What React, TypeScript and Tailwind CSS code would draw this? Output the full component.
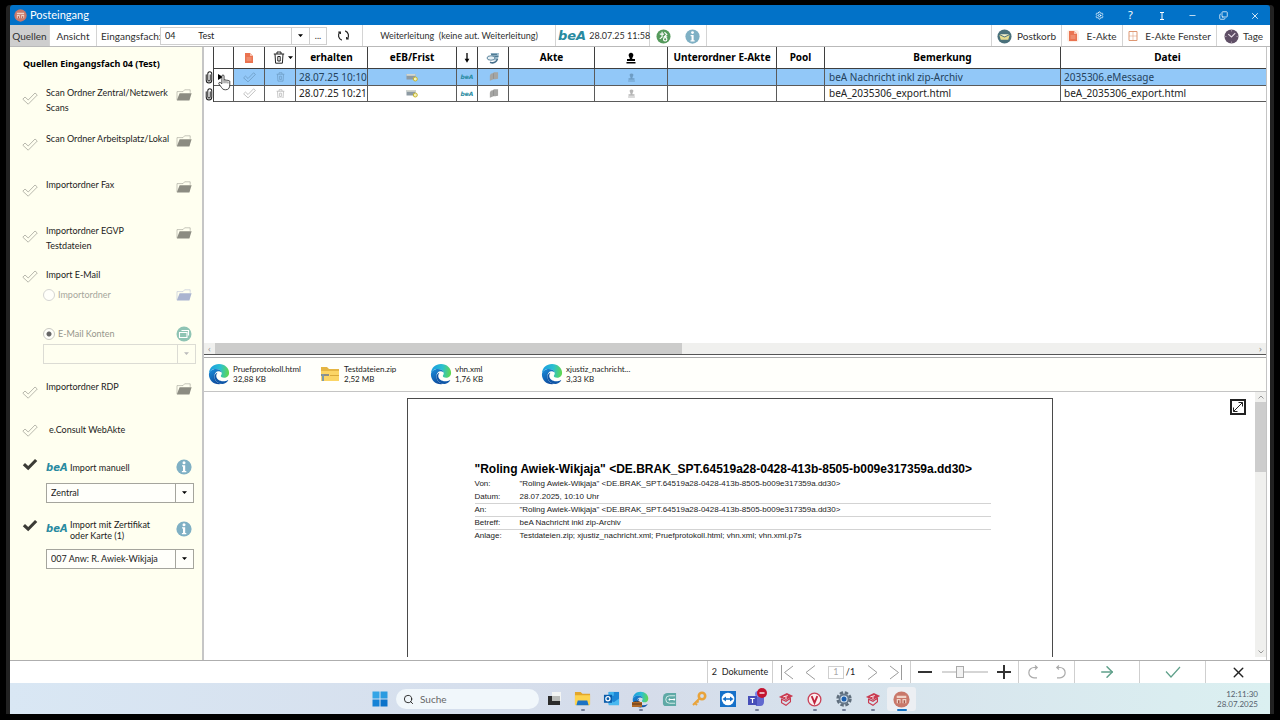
import React, { useId } from "react";
import { Settings, Search, X, Minus, Copy, ArrowRight, Check } from "lucide-react";

type IconProps = { className?: string };

function TickShape({ className = "" }: IconProps) {
  return (
    <svg viewBox="0 0 16 13" className={className} strokeWidth="1" strokeLinejoin="round" aria-hidden="true">
      <path d="M0.8 7.2 3 5l3.2 3L13 1l2.3 2L6.2 12.2z" />
    </svg>
  );
}

function ClipIcon({ className = "" }: IconProps) {
  return (
    <svg viewBox="0 0 8 14" className={className} fill="none" stroke="currentColor" strokeWidth="1.100" strokeLinecap="round" aria-hidden="true">
      <path d="M1 4v5.700c0 4.300 6 4.300 6 0V3.300c0-3.400-4.300-3.400-4.300 0v6c0 1.900 2.600 1.900 2.600 0V4" />
    </svg>
  );
}

function FolderIcon({ className = "" }: IconProps) {
  return (
    <svg viewBox="0 0 16 12" className={className} aria-hidden="true">
      <path d="M1 11V2.600h6L8.600.8h5.600v3" fill="none" stroke="currentColor" strokeOpacity=".55" strokeWidth=".9" />
      <path d="M3.600 4.200h12L13.400 11.400H.8z" fill="currentColor" />
    </svg>
  );
}

function EdgeIcon({ className = "" }: IconProps) {
  const id = useId();
  return (
    <svg viewBox="0 0 24 24" className={className} aria-hidden="true">
      <defs>
        <linearGradient id={id + "a"} x1="0" y1="0.4" x2="1" y2="0.5">
          <stop offset="0" stopColor="#1b9be0" />
          <stop offset=".55" stopColor="#2bc0d0" />
          <stop offset="1" stopColor="#62d84e" />
        </linearGradient>
        <linearGradient id={id + "b"} x1="0" y1="0" x2="0.5" y2="1">
          <stop offset="0" stopColor="#1a8fdc" />
          <stop offset="1" stopColor="#0d4c9e" />
        </linearGradient>
      </defs>
      <path
        d="M1 11C1.500 5 6 1 12 1c6.500 0 11 4.500 11 9.500 0 3.500-2.500 5.500-5.500 5.500-2 0-3.500-.8-3.500-1.800 0-.7 1-1.200 1-3C15 9 12.500 6.500 8.500 6.500 5 6.500 2.500 8.200 1 11z"
        fill={`url(#${id}a)`}
      />
      <path
        d="M1 12.500C1.200 9 4.500 6.500 8.500 6.500c3.500 0 5.800 1.600 6.400 3.800-1-.9-2.200-1.300-3.400-1.300-2.500 0-4.500 2.200-4.500 5.500 0 4.500 3.500 8 8 8.200-1 .3-2 .5-3 .5C5.700 23.200 1 18.500 1 12.500z"
        fill={`url(#${id}b)`}
      />
      <path
        d="M10.300 10.500c-.8 1-1.300 2.200-1.300 3.500 0 3.600 3.600 6 7.500 6 2 0 3.700-.5 5-1.300.4-.2.7.2.5.5-1.500 2.300-4 3.700-6.500 3.700C10.800 22.900 7 19 7 14.500c0-1.800 1.500-3.500 3.300-4z"
        fill="#0f57a8"
      />
    </svg>
  );
}

function ZipFolder({ className = "" }: IconProps) {
  return (
    <svg viewBox="0 0 20 16" className={className} aria-hidden="true">
      <path d="M1 1h6l2 2h10v12H1z" fill="#e5b544" />
      <path d="M1 5h18v10H1z" fill="#fbd566" />
      <path d="M1 8h8v2H1z" fill="#8f8f86" />
      <path d="M2 8v7h2V8z" fill="#7f9aa8" />
      <path d="M10 9h9v1h-9z" fill="#d9a93a" />
    </svg>
  );
}

function InfoBadge({ className = "" }: IconProps) {
  return (
    <svg viewBox="0 0 16 16" className={className} aria-hidden="true">
      <circle cx="8" cy="8" r="7.600" fill="#7fb0c4" />
      <circle cx="8" cy="3.800" r="1.500" fill="#fff" />
      <path d="M6 6.300h3.200v5.600h1.100v1.300H5.900v-1.300H7V7.600H6z" fill="#fff" />
    </svg>
  );
}

function SendBadge({ className = "" }: IconProps) {
  return (
    <svg viewBox="0 0 16 16" className={className} aria-hidden="true">
      <circle cx="8" cy="8" r="7.500" fill="#559a5c" />
      <g fill="none" stroke="#fff" strokeWidth="1.200">
        <path d="M4 5.500h4.500M6.500 3v5.500L4 10.500" />
        <circle cx="9.800" cy="11" r="1.800" />
        <path d="M9 3.500l2.500 2.300L9 8.200h3" />
      </g>
    </svg>
  );
}

function MailBadge({ className = "" }: IconProps) {
  return (
    <svg viewBox="0 0 16 16" className={className} aria-hidden="true">
      <circle cx="8" cy="8" r="7.500" fill="#8fc4b4" />
      <path d="M5.500 4.500h7v5M3.500 6.500h7.500v5H3.500z" fill="none" stroke="#fff" strokeWidth="1.100" />
    </svg>
  );
}

function DocIcon({ className = "" }: IconProps) {
  return (
    <svg viewBox="0 0 10 12" className={className} aria-hidden="true">
      <path d="M1 1h5l3 3v7H1z" fill="#ea7350" />
      <path d="M6 1v3h3" fill="#f8c0ac" />
      <path d="M2.500 6h5M2.500 8h5" stroke="#f7b7a0" strokeWidth=".7" />
    </svg>
  );
}

function TrashIcon({ className = "" }: IconProps) {
  return (
    <svg viewBox="0 0 12 13" className={className} fill="none" stroke="currentColor" strokeLinejoin="round" aria-hidden="true">
      <path d="M.8 3h10.400M4 3V1h4v2M2 3l.6 9.200h6.800L10 3M4.800 5.500v4.500h2.400V5.500z" />
    </svg>
  );
}

function StampIcon({ className = "" }: IconProps) {
  return (
    <svg viewBox="0 0 12 12" className={className} fill="currentColor" aria-hidden="true">
      <path d="M6 .8a2.400 2.400 0 0 1 2.300 3C8 5 7.200 5.500 7.200 7H10v2H2V7h2.800c0-1.500-.8-2-1.100-3.200A2.400 2.400 0 0 1 6 .8zM1.500 10h9v1.400h-9z" />
    </svg>
  );
}

function CardIcon({ className = "" }: IconProps) {
  return (
    <svg viewBox="0 0 12 9" className={className} aria-hidden="true">
      <path d="M.5 1h9v5.500h-9z" fill="#8d9aa3" />
      <path d="M.5 1h9v1.800h-9z" fill="#d3d6cf" />
      <circle cx="9.300" cy="6" r="2" fill="#f4f0b8" stroke="#c5b530" />
    </svg>
  );
}

function PagesIcon({ className = "" }: IconProps) {
  return (
    <svg viewBox="0 0 12 10" className={className} aria-hidden="true">
      <path d="M3 2l3-.8V.3h5v7L8 8H6l-4 1.500V4z" fill="#a5a5a3" />
      <path d="M6 1.500v6" stroke="#8a8a88" strokeWidth=".7" />
    </svg>
  );
}

function PrinterIcon({ className = "" }: IconProps) {
  return (
    <svg viewBox="0 0 14 12" className={className} aria-hidden="true">
      <path d="M4.500 1H13l-1 6.500-4 1z" fill="#9dbccd" />
      <path d="M5 2.300h6M5 4.300h7.500" stroke="#3d6c88" />
      <ellipse cx="5" cy="6" rx="4" ry="2.200" fill="#e6f0f5" stroke="#5d869e" />
      <path d="M4 10.200c3 1.300 6 0 7.500-3.200" fill="none" stroke="#466f8b" strokeWidth="1.600" />
    </svg>
  );
}

function DownTriangle({ className = "" }: IconProps) {
  return (
    <svg viewBox="0 0 6 4" className={className} fill="currentColor" aria-hidden="true">
      <path d="M0 .3h6L3 3.700z" />
    </svg>
  );
}

function RobotBadge({ className = "" }: IconProps) {
  return (
    <svg viewBox="0 0 16 16" className={className} aria-hidden="true">
      <circle cx="8" cy="8" r="7.600" fill="#c9786a" />
      <path d="M3.500 4.500h9v2h-9zM3.500 7.500h3.600v4H3.500zM8.900 7.500h3.600v4H8.900z" fill="#f0d3c8" />
      <path d="M4.700 8.800h1.400v2.700H4.700zM10 8.800h1.400v2.700H10z" fill="#a85848" />
    </svg>
  );
}

function BeaLogo({ className = "" }: IconProps) {
  return <span className={"font-['DejaVu_Sans',sans-serif] font-bold italic text-[#288aa0] " + className}>beA</span>;
}

function SelectBox(props: {
  id: string;
  label: string;
  value: string;
  className: string;
  arrow?: string;
  disabled?: boolean;
}) {
  const { id, label, value, className, arrow = "border-l border-[#a5a59d] text-black", disabled = false } = props;
  return (
    <div className={"relative " + className}>
      <select
        id={id}
        aria-label={label}
        disabled={disabled}
        className="block h-full w-full appearance-none bg-transparent pl-1 pr-5 text-[9px] text-[#222] outline-none"
      >
        <option>{value}</option>
      </select>
      <span className={"pointer-events-none absolute inset-y-0 right-0 flex w-[18px] items-center justify-center " + arrow}>
        <DownTriangle className="w-[5px]" />
      </span>
    </div>
  );
}

function SourceRow(props: { label: string; height: string; folder?: boolean; tick?: string; text?: string }) {
  const { label, height, folder = true, tick = "mt-[7px]", text = "" } = props;
  return (
    <div className={"flex items-start " + height}>
      <TickShape className={"mr-[8px] w-[16px] shrink-0 fill-none stroke-[#b9b9ae] " + tick} />
      <span className={"flex-1 leading-[15px] " + text}>{label}</span>
      {folder && (
        <button aria-label={"Ordner " + label} className="mt-[4px] shrink-0 text-[#8c8c82]">
          <FolderIcon className="w-[16px]" />
        </button>
      )}
    </div>
  );
}

function Sidebar() {
  return (
    <aside className="w-[194px] shrink-0 border-r-2 border-[#c6c6c6] bg-[#fffff0] pl-[12px] pr-[10px] font-['Lato','Noto_Sans',sans-serif] text-[9px] text-[#1c1c1c]">
      <h2 className="h-[38px] whitespace-nowrap pl-px pt-[9px] font-['Noto_Sans',sans-serif] font-bold leading-[16px] text-black">
        Quellen Eingangsfach 04 (Test)
      </h2>
      <SourceRow label="Scan Ordner Zentral/Netzwerk Scans" height="h-[46px]" />
      <SourceRow label="Scan Ordner Arbeitsplatz/Lokal" height="h-[46px]" text="whitespace-nowrap" />
      <SourceRow label="Importordner Fax" height="h-[46px]" />
      <SourceRow label="Importordner EGVP Testdateien" height="h-[44px]" text="pr-[40px]" />
      <SourceRow label="Import E-Mail" height="h-[20px]" folder={false} tick="mt-[3px]" />
      <div className="flex h-[39px] items-start pl-[21px] text-[#a6a69c]">
        <label className="flex flex-1 items-center gap-[3px] leading-[15px]">
          <input
            type="radio"
            name="mail"
            disabled
            className="size-[12px] appearance-none rounded-full border border-[#d5d5d2] bg-[#fffffa]"
          />
          Importordner
        </label>
        <FolderIcon className="mt-[2px] w-[16px] text-[#aab4d0]" />
      </div>
      <div className="flex h-[18px] items-start pl-[21px] text-[#96968c]">
        <label className="flex flex-1 items-center gap-[3px] leading-[15px]">
          <input
            type="radio"
            name="mail"
            disabled
            defaultChecked
            className="size-[12px] appearance-none rounded-full border border-[#c9c9c2] bg-[radial-gradient(circle,#666_2px,#fffffa_3px)]"
          />
          E-Mail Konten
        </label>
        <MailBadge className="w-[16px]" />
      </div>
      <SelectBox
        id="konto"
        label="E-Mail Konto"
        value=""
        disabled
        className="ml-[21px] -mr-[4px] h-[20px] border border-[#dcdcd4]"
        arrow="border-l border-[#dcdcd4] text-[#bbb]"
      />
      <div className="h-[15px]" />
      <SourceRow label="Importordner RDP" height="h-[43px]" />
      <SourceRow label="e.Consult WebAkte" height="h-[36px]" folder={false} tick="mt-[2px]" text="pl-[3px]" />
      <div className="flex h-[25px] items-start">
        <TickShape className="mr-[8px] w-[16px] fill-[#3b3b36]" />
        <BeaLogo className="w-[24px] text-[10px] leading-[20px]" />
        <label htmlFor="manuell" className="flex-1 leading-[20px]">
          Import manuell
        </label>
        <InfoBadge className="mt-px w-[16px]" />
      </div>
      <SelectBox
        id="manuell"
        label="Import manuell"
        value="Zentral"
        className="-mr-[2px] ml-[24px] h-[20px] border border-[#a5a59d] bg-[#fffffa]"
      />
      <div className="mt-[16px] flex h-[30px] items-start">
        <TickShape className="mr-[8px] w-[16px] fill-[#3b3b36]" />
        <BeaLogo className="w-[24px] text-[10px] leading-[20px]" />
        <label htmlFor="zertifikat" className="flex-1 pr-[20px] leading-[11px]">
          Import mit Zertifikat oder Karte (1)
        </label>
        <InfoBadge className="mt-[2px] w-[16px]" />
      </div>
      <SelectBox
        id="zertifikat"
        label="Import mit Zertifikat"
        value="007 Anw: R. Awiek-Wikjaja"
        className="-mr-[2px] ml-[24px] h-[20px] border border-[#a5a59d] bg-[#fffffa]"
      />
    </aside>
  );
}

function TitleBar() {
  const button = "flex h-full w-[31px] items-center justify-center";
  return (
    <header className="flex h-[20px] shrink-0 items-center rounded-t-[3px] bg-[#0272c8] pl-[4px] pt-px text-white">
      <RobotBadge className="w-[13px]" />
      <h1 className="ml-[3px] flex-1 font-['Lato','Noto_Sans',sans-serif] text-[11px]">Posteingang</h1>
      <button aria-label="Einstellungen" className={button}>
        <Settings size={9} />
      </button>
      <button aria-label="Hilfe" className={button + " text-[11px]"}>
        ?
      </button>
      <button aria-label="Anheften" className={button}>
        <svg viewBox="0 0 8 8" className="w-[8px]" stroke="currentColor" aria-hidden="true">
          <path d="M2 .5h4M2 7.500h4M4 .5v7" />
        </svg>
      </button>
      <button aria-label="Minimieren" className={button}>
        <Minus size={9} />
      </button>
      <button aria-label="Wiederherstellen" className={button}>
        <Copy size={9} className="-scale-x-100 rotate-180" />
      </button>
      <button aria-label="Schließen" className={button}>
        <X size={10} />
      </button>
    </header>
  );
}

function Toolbar() {
  const cell = "flex h-full items-center border-r border-[#d4d4d4]";
  return (
    <div className="flex h-[22px] shrink-0 items-center border-b border-[#b9b9b9] font-['Lato','Noto_Sans',sans-serif] text-[10px] text-[#303030]">
      <button className={cell + " w-[40px] justify-center bg-[#cecece] pt-px"}>Quellen</button>
      <button className={cell + " w-[47px] justify-center pt-px"}>Ansicht</button>
      <label htmlFor="fach" className="w-[63px] pl-[4px] pt-px">
        Eingangsfach:
      </label>
      <SelectBox
        id="fach"
        label="Eingangsfach"
        value={"04\u00a0\u00a0\u00a0\u00a0\u00a0\u00a0\u00a0\u00a0\u00a0\u00a0Test"}
        className="h-[18px] w-[150px] border border-[#cfcfcf]"
        arrow="border-l border-[#cfcfcf] text-black"
      />
      <button aria-label="Fach auswählen" className="h-[18px] w-[17px] border-y border-r border-[#cfcfcf] text-[9px] leading-[16px]">
        ...
      </button>
      <button aria-label="Aktualisieren" className={cell + " w-[36px] justify-center pr-[3px]"}>
        <svg viewBox="0 0 14 14" className="w-[13px]" fill="none" stroke="#222" strokeWidth="1.300" aria-hidden="true">
          <path d="M5.200 12A5.400 5.400 0 0 1 3 3.300M8.800 2A5.400 5.400 0 0 1 11 10.700" />
          <path d="M1.400 3.300h2.200v2.200M12.600 10.700h-2.200V8.500" />
        </svg>
      </button>
      <button className={cell + " w-[193px] justify-center whitespace-pre pt-px text-[9px]"}>
        {"Weiterleitung  (keine aut. Weiterleitung)"}
      </button>
      <button className={cell + " w-[94px] gap-[3px] whitespace-nowrap pl-[2px] pt-px text-[9px]"}>
        <BeaLogo className="text-[13px]" />
        28.07.25 11:58
      </button>
      <div className={cell + " w-[57px] justify-center gap-[14px] pt-px"}>
        <button aria-label="Senden">
          <SendBadge className="w-[15px]" />
        </button>
        <button aria-label="Information">
          <InfoBadge className="w-[15px]" />
        </button>
      </div>
      <div className={cell + " flex-1"} />
      <button className={cell + " w-[70px] justify-center gap-[5px] pt-px"}>
        <svg viewBox="0 0 16 16" className="w-[15px]" aria-hidden="true">
          <circle cx="8" cy="8" r="7.500" fill="#49707b" />
          <path d="M2.500 6.500 8 9l5.500-2.500-1.500 5H4z" fill="#e6dc8e" />
          <path d="M3 5.500h10L8 8z" fill="#f6f2cc" />
        </svg>
        Postkorb
      </button>
      <button className={cell + " w-[61px] justify-center gap-[7px] pt-px"}>
        <span className="rounded-[3px] bg-[#fdeee4] px-px">
          <DocIcon className="w-[10px]" />
        </span>
        E-Akte
      </button>
      <button className={cell + " w-[94px] justify-center gap-[7px] whitespace-nowrap pt-px"}>
        <svg viewBox="0 0 10 10" className="w-[10px]" fill="none" stroke="#de9874" aria-hidden="true">
          <path d="M1 .5h8v9H1z" />
          <path d="M5 .5v9M1 5h8" strokeOpacity=".5" />
        </svg>
        E-Akte Fenster
      </button>
      <button className="flex w-[53px] items-center justify-center gap-[4px] pt-px">
        <svg viewBox="0 0 16 16" className="w-[15px]" aria-hidden="true">
          <circle cx="8" cy="8" r="7.500" fill="#5f4f66" />
          <path d="M4.500 5.500 8 8.500 12 4.500" fill="none" stroke="#e9dfe9" strokeWidth="1.200" />
          <path d="M8 1.500v1M8 13.500v1M1.500 8h1M13.500 8h1" stroke="#cbbccb" />
        </svg>
        Tage
      </button>
    </div>
  );
}

type Mail = { received: string; note: string; file: string; selected: boolean };

const mails: Mail[] = [
  { received: "28.07.25 10:10", note: "beA Nachricht inkl zip-Archiv", file: "2035306.eMessage", selected: true },
  { received: "28.07.25 10:21", note: "beA_2035306_export.html", file: "beA_2035306_export.html", selected: false },
];

function HandPointer({ className = "" }: IconProps) {
  return (
    <svg viewBox="0 0 14 18" className={className} aria-hidden="true">
      <path
        d="M4.200 10.500V2.200c0-1.600 2.300-1.600 2.300 0v4.600c.2-1 2-.9 2.100.2.300-.9 2-.7 2.100.4.500-.7 2-.4 2 .8v3.600c0 3-1.300 5.200-4.500 5.200-2.600 0-3.400-.9-4.400-2.500L1 10.800c-.8-1.500 1-2.500 2-1.300z"
        fill="#fff"
        stroke="#222"
        strokeWidth=".9"
      />
      <path d="M6.500 7v3M8.600 7.500V10M10.700 8v2.200" stroke="#222" strokeWidth=".7" />
    </svg>
  );
}

function MailTable() {
  const th = "h-[22px] border-b border-r border-[#3f3f3f] p-0 align-middle";
  return (
    <table className="w-full table-fixed border-separate border-spacing-0 text-[10px] text-[#222]">
      <colgroup>
        <col className="w-[10px]" />
        <col className="w-[20px]" />
        <col className="w-[31px]" />
        <col className="w-[31px]" />
        <col className="w-[72px]" />
        <col className="w-[89px]" />
        <col className="w-[21px]" />
        <col className="w-[31px]" />
        <col className="w-[86px]" />
        <col className="w-[73px]" />
        <col className="w-[109px]" />
        <col className="w-[48px]" />
        <col className="w-[236px]" />
        <col />
      </colgroup>
      <thead>
        <tr className="text-[10px] font-bold text-black">
          <th className="border-r border-[#3f3f3f] p-0" />
          <th className={th} />
          <th className={th}>
            <DocIcon className="mx-auto w-[10px]" />
          </th>
          <th className={th}>
            <span className="flex items-center justify-center gap-[3px] pl-[5px]">
              <TrashIcon className="w-[12px] text-[#222]" />
              <DownTriangle className="w-[5px]" />
            </span>
          </th>
          <th className={th}>erhalten</th>
          <th className={th}>eEB/Frist</th>
          <th className={th}>
            <svg viewBox="0 0 6 10" className="mx-auto w-[6px]" aria-hidden="true">
              <path d="M3 0v7" stroke="#000" strokeWidth="1.300" />
              <path d="M.6 5.800h4.800L3 9.800z" />
            </svg>
          </th>
          <th className={th}>
            <PrinterIcon className="mx-auto w-[14px]" />
          </th>
          <th className={th}>Akte</th>
          <th className={th}>
            <StampIcon className="mx-auto w-[12px]" />
          </th>
          <th className={th + " whitespace-nowrap"}>Unterordner E-Akte</th>
          <th className={th}>Pool</th>
          <th className={th}>Bemerkung</th>
          <th className="border-b border-[#3f3f3f] p-0 pl-[8px]">Datei</th>
        </tr>
      </thead>
      <tbody>
        {mails.map((m) => {
          const td =
            "border-b border-r border-[#5a5a5a] p-0 whitespace-nowrap " +
            (m.selected ? "h-[17px] leading-[16px] bg-[#92c8f8] text-[#24425c]" : "h-[16px] leading-[15px] bg-white");
          const soft = m.selected ? "text-[#6d9cc4]" : "text-[#b5b5b5]";
          return (
            <tr key={m.file}>
              <td className="border-r border-[#3f3f3f] p-0">
                <ClipIcon className="mx-auto h-[13px] w-[8px] text-[#222]" />
              </td>
              <td className="relative border-b border-r border-[#5a5a5a] p-0">
                {m.selected && (
                  <>
                    <svg viewBox="0 0 5 6" className="ml-[4px] w-[5px]" aria-hidden="true">
                      <path d="M0 0v6l5-3z" />
                    </svg>
                    <HandPointer className="absolute left-[4px] top-[5px] z-10 w-[13px]" />
                  </>
                )}
              </td>
              <td className={td}>
                <TickShape className={"mx-auto w-[13px] fill-none stroke-current " + soft} />
              </td>
              <td className={td}>
                <TrashIcon className={"mx-auto w-[9px] " + soft} />
              </td>
              <td className={td + " pl-[3px]"}>{m.received}</td>
              <td className={td}>
                <CardIcon className="mx-auto w-[12px]" />
              </td>
              <td className={td + " text-center"}>
                <BeaLogo className="block text-[6px]" />
              </td>
              <td className={td}>
                <PagesIcon className="mx-auto w-[11px]" />
              </td>
              <td className={td} />
              <td className={td}>
                <StampIcon className={"mx-auto w-[9px] " + soft} />
              </td>
              <td className={td} />
              <td className={td} />
              <td className={td + " pl-[4px]"}>{m.note}</td>
              <td className={td + " border-r-0 pl-[3px]"}>{m.file}</td>
            </tr>
          );
        })}
      </tbody>
    </table>
  );
}

const attachments = [
  { name: "Pruefprotokoll.html", size: "32,88 KB", zip: false },
  { name: "Testdateien.zip", size: "2,52 MB", zip: true },
  { name: "vhn.xml", size: "1,76 KB", zip: false },
  { name: "xjustiz_nachricht...", size: "3,33 KB", zip: false },
];

function Attachments() {
  return (
    <ul className="flex h-[34px] shrink-0 border-b border-[#c4c4c4] bg-[#fffffb] pb-[2px] pl-[4px] font-['Lato','Noto_Sans',sans-serif] text-[8px] leading-[10px] text-[#222]">
      {attachments.map((a) => (
        <li key={a.name} className="flex w-[111px] items-center gap-[3px] whitespace-nowrap">
          <span className="flex w-[22px] justify-center">
            {a.zip ? <ZipFolder className="w-[20px]" /> : <EdgeIcon className="w-[22px]" />}
          </span>
          <span>
            {a.name}
            <br />
            {a.size}
          </span>
        </li>
      ))}
    </ul>
  );
}

const sender = '"Roling Awiek-Wikjaja" <DE.BRAK_SPT.64519a28-0428-413b-8505-b009e317359a.dd30>';

const headers = [
  { name: "Von:", value: sender, line: false },
  { name: "Datum:", value: "28.07.2025, 10:10 Uhr", line: true },
  { name: "An:", value: sender, line: true },
  { name: "Betreff:", value: "beA Nachricht inkl zip-Archiv", line: true },
  { name: "Anlage:", value: "Testdateien.zip; xjustiz_nachricht.xml; Pruefprotokoll.html; vhn.xml; vhn.xml.p7s", line: false },
];

function Preview() {
  return (
    <section className="flex min-h-0 flex-1 bg-white">
      <div className="flex min-w-0 flex-1 items-stretch pt-[6px]">
        <div className="flex-1 pl-[9px]" />
        <article className="w-[646px] border-x border-t border-[#4a4a4a] bg-white pl-[67px] pr-[61px] pt-[61px] font-['Liberation_Sans',sans-serif] text-[#222]">
          <h2 className="whitespace-nowrap text-[12px] font-bold leading-[18px] text-black">{sender}</h2>
          <dl className="text-[8px] leading-[12px]">
            {headers.map((h) => (
              <div key={h.name} className={"flex h-[13px] whitespace-nowrap " + (h.line ? "border-b border-[#d3d3d3]" : "")}>
                <dt className="w-[45px]">{h.name}</dt>
                <dd>{h.value}</dd>
              </div>
            ))}
          </dl>
        </article>
        <div className="flex flex-1 items-start justify-end pr-[9px]">
          <button aria-label="Vergrößern" className="mt-px border-2 border-[#222]">
            <svg viewBox="0 0 12 12" className="w-[12px]" fill="none" stroke="#222" aria-hidden="true">
              <path d="M1.500 10.500l9-9M6.500 1.500h4v4M1.500 6.500v4h4" />
            </svg>
          </button>
        </div>
      </div>
      <div className="flex w-[11px] flex-col items-center bg-[#f0f0ee] py-[3px]">
        <svg viewBox="0 0 6 4" className="w-[6px]" fill="none" stroke="#999" aria-hidden="true">
          <path d="M.5 3.500 3 1l2.500 2.500" />
        </svg>
        <div className="mt-[3px] h-[70px] w-full bg-[#cdcdcd]" />
        <div className="flex-1" />
        <svg viewBox="0 0 6 4" className="w-[6px]" fill="none" stroke="#999" aria-hidden="true">
          <path d="M.5.5 3 3 5.500.5" />
        </svg>
      </div>
    </section>
  );
}

function FooterBar() {
  const cell = "flex h-full items-center border-l border-[#cfcfcf]";
  const nav = "h-[15px] text-[#9b9b9b]";
  return (
    <div className="flex h-[23px] shrink-0 items-center justify-end border-t border-[#aeaeae] bg-white font-['Lato','Noto_Sans',sans-serif] text-[9px] text-[#222]">
      <span className={cell + " w-[65px] justify-center whitespace-pre"}>{"2  Dokumente"}</span>
      <div className={cell + " w-[138px] justify-between px-[7px]"}>
        <button aria-label="Erste Seite">
          <svg viewBox="0 0 14 15" className={nav} fill="none" stroke="currentColor" aria-hidden="true">
            <path d="M1.500 0v15M13 1 4.500 7.500 13 14" />
          </svg>
        </button>
        <button aria-label="Vorige Seite">
          <svg viewBox="0 0 11 15" className={nav} fill="none" stroke="currentColor" aria-hidden="true">
            <path d="M10 .5 1 7.500l9 7" />
          </svg>
        </button>
        <span className="flex items-center gap-[2px]">
          <input
            aria-label="Seite"
            defaultValue="1"
            className="h-[13px] w-[16px] border border-[#cfcfcf] text-center text-[9px] text-[#aaa]"
          />
          /1
        </span>
        <button aria-label="Nächste Seite">
          <svg viewBox="0 0 11 15" className={nav} fill="none" stroke="currentColor" aria-hidden="true">
            <path d="M1 .5l9 7-9 7" />
          </svg>
        </button>
        <button aria-label="Letzte Seite">
          <svg viewBox="0 0 14 15" className={nav} fill="none" stroke="currentColor" aria-hidden="true">
            <path d="M12.500 0v15M1 1l8.500 6.500L1 14" />
          </svg>
        </button>
      </div>
      <div className={cell + " w-[108px] justify-between px-[6px]"}>
        <button aria-label="Verkleinern">
          <svg viewBox="0 0 16 16" className="w-[16px]" stroke="#333" strokeWidth="2" aria-hidden="true">
            <path d="M1 8h14" />
          </svg>
        </button>
        <input
          type="range"
          aria-label="Zoom"
          defaultValue="38"
          className="h-[12px] w-[46px] appearance-none bg-[linear-gradient(#d5d5d5,#d5d5d5)] bg-[length:100%_2px] bg-center bg-no-repeat [&::-webkit-slider-thumb]:h-[12px] [&::-webkit-slider-thumb]:w-[8px] [&::-webkit-slider-thumb]:appearance-none [&::-webkit-slider-thumb]:border [&::-webkit-slider-thumb]:border-[#aaa] [&::-webkit-slider-thumb]:bg-[#f2f2f2]"
        />
        <button aria-label="Vergrößern">
          <svg viewBox="0 0 16 16" className="w-[16px]" stroke="#333" strokeWidth="2" aria-hidden="true">
            <path d="M1 8h14M8 1v14" />
          </svg>
        </button>
      </div>
      <div className={cell + " w-[56px] justify-center gap-[16px]"}>
        <button aria-label="Rückgängig">
          <svg viewBox="0 0 12 14" className="h-[14px]" fill="none" stroke="#aaa" strokeWidth="1.200" aria-hidden="true">
            <path d="M10 2.500H7a5 5 0 0 0 0 10.300h3M8 .5l2.200 2L8 4.500" />
          </svg>
        </button>
        <button aria-label="Wiederholen">
          <svg viewBox="0 0 12 14" className="h-[14px]" fill="none" stroke="#aaa" strokeWidth="1.200" aria-hidden="true">
            <path d="M2 2.500h3a5 5 0 0 1 0 10.300H2M4 .5l-2.200 2L4 4.500" />
          </svg>
        </button>
      </div>
      <button aria-label="Weiter" className={cell + " w-[65px] justify-center text-[#5fa08a]"}>
        <ArrowRight size={18} strokeWidth={2} />
      </button>
      <button aria-label="Übernehmen" className={cell + " w-[66px] justify-center text-[#5fa08a]"}>
        <svg viewBox="0 0 16 12" className="w-[16px]" fill="none" stroke="currentColor" strokeWidth="1.200" aria-hidden="true">
          <path d="M1 5.500 6 11 15 1" />
        </svg>
      </button>
      <button aria-label="Schließen" className={cell + " w-[65px] justify-center text-[#222]"}>
        <X size={17} strokeWidth={2} />
      </button>
    </div>
  );
}

function CapIcon() {
  return (
    <svg viewBox="0 0 18 16" className="w-[16px]" aria-hidden="true">
      <path d="M1 5.500 10 1l7 3.500L9 9z" fill="#c93a50" />
      <path d="M4 8v4l5 3 5-4V7L9 10.500z" fill="none" stroke="#c93a50" strokeWidth="1.300" />
      <path d="M6 5.500l5-1.500M9 5v3" stroke="#fff" />
    </svg>
  );
}

function TaskItem({ label, dot = "", children }: { label: string; dot?: string; children: React.ReactNode }) {
  return (
    <button aria-label={label} className="relative flex h-[24px] w-[29px] items-center justify-center">
      {children}
      {dot && <span className={"absolute bottom-0 h-[2px] rounded-full " + dot} />}
    </button>
  );
}

function Taskbar() {
  const idle = "w-[4px] bg-[#76809a]";
  return (
    <footer className="grid h-[31px] shrink-0 grid-cols-[1fr_auto_1fr] items-center bg-linear-to-r from-[#d9e7f4] via-[#d5dcea] via-50% to-[#dbf0f1] pt-px">
      <div />
      <div className="flex items-center pl-px">
        <TaskItem label="Start">
          <svg viewBox="0 0 16 16" className="w-[16px]" aria-hidden="true">
            <path d="M.5.500h7v7h-7z" fill="#35a5e6" />
            <path d="M8.500.500h7v7h-7z" fill="#2b9be0" />
            <path d="M.5 8.500h7v7h-7z" fill="#1683d6" />
            <path d="M8.500 8.500h7v7h-7z" fill="#0c73ca" />
          </svg>
        </TaskItem>
        <label className="ml-[2px] flex h-[20px] w-[143px] items-center gap-[6px] rounded-full bg-[#f1f7fb] pl-[7px]">
          <Search size={11} className="shrink-0 text-[#222]" />
          <input
            placeholder="Suche"
            aria-label="Suche"
            className="w-[80px] bg-transparent font-['Lato','Noto_Sans',sans-serif] text-[10px] text-[#555] outline-none placeholder:text-[#666]"
          />
        </label>
        <TaskItem label="Aktive Anwendungen">
          <svg viewBox="0 0 16 16" className="w-[16px]" aria-hidden="true">
            <path d="M6 1h9v9H6z" fill="#f3f5f4" />
            <path d="M2 5h4v5h8v4H2z" fill="#2b2b2b" />
            <path d="M6 5h8v5H6z" fill="#b9bbb8" />
          </svg>
        </TaskItem>
        <TaskItem label="Explorer" dot={idle}>
          <svg viewBox="0 0 18 16" className="w-[17px]" aria-hidden="true">
            <path d="M1 1h6l2 2h8v11H1z" fill="#e3a62b" />
            <path d="M1 4.500h16V15H1z" fill="#fdd34f" />
            <path d="M4 10h10l1.500 5h-13z" fill="#1d73c4" />
          </svg>
        </TaskItem>
        <TaskItem label="Outlook">
          <svg viewBox="0 0 18 16" className="w-[17px]" aria-hidden="true">
            <path d="M6 1h11v13H6z" fill="#1c86d6" />
            <path d="M6 1h5.500v4H6z" fill="#3fb3ee" />
            <path d="M6 9l5.500 3L17 8v7H6z" fill="#49b8f0" />
            <path d="M1 4h8.500v8.500H1z" fill="#0b5dab" />
            <circle cx="5.200" cy="8.200" r="2.200" fill="none" stroke="#fff" strokeWidth="1.300" />
          </svg>
        </TaskItem>
        <TaskItem label="Edge" dot={idle}>
          <EdgeIcon className="w-[17px]" />
          <svg viewBox="0 0 10 6" className="absolute bottom-[4px] left-[6px] w-[10px]" aria-hidden="true">
            <path d="M0 1h10v5H0z" fill="#b06a2a" />
            <path d="M3 1V0h4v1M0 3h10" stroke="#5c3310" fill="none" />
          </svg>
        </TaskItem>
        <TaskItem label="Scan">
          <svg viewBox="0 0 16 16" className="w-[15px]" aria-hidden="true">
            <path d="M6 1h9v14H4a3 3 0 0 1-3-3V6a5 5 0 0 1 5-5z" fill="#5fa9a6" />
            <path d="M14 4H8a4 4 0 0 0 0 8h6" fill="none" stroke="#d9efec" strokeWidth="1" />
            <path d="M7 8h7M8 7v2M13 7v2" stroke="#fff" strokeWidth="1.300" />
          </svg>
        </TaskItem>
        <TaskItem label="Schlüssel">
          <svg viewBox="0 0 16 16" className="w-[16px]" fill="none" stroke="#e9a33a" aria-hidden="true">
            <circle cx="11" cy="5" r="3.200" strokeWidth="2.600" />
            <path d="M8.500 7.500 2 14M4 12l2 2M6 10l1.500 1.500" strokeWidth="2" />
          </svg>
        </TaskItem>
        <TaskItem label="Fernwartung">
          <svg viewBox="0 0 16 16" className="w-[16px]" aria-hidden="true">
            <path d="M0 0h16v16H0z" fill="#1671c9" />
            <circle cx="8" cy="8" r="6.300" fill="#fff" />
            <path d="M2.500 8 6 5.500v1.700h4V5.500L13.500 8 10 10.500V8.800H6v1.700z" fill="#1671c9" />
          </svg>
        </TaskItem>
        <TaskItem label="Teams" dot={idle}>
          <svg viewBox="0 0 20 20" className="mb-[2px] w-[20px]" aria-hidden="true">
            <circle cx="11" cy="6" r="3" fill="#7b83eb" />
            <path d="M7 9h10v5a4 4 0 0 1-4 4H9z" fill="#6169cf" />
            <path d="M1 8h9v9H1z" fill="#464eb8" />
            <path d="M3.300 10.500h4.400M5.500 10.500v4.500" stroke="#fff" strokeWidth="1.200" />
            <circle cx="15" cy="5" r="5" fill="#c4142f" />
            <path d="M12.500 5h5" stroke="#fff" strokeWidth="1.300" />
          </svg>
        </TaskItem>
        <TaskItem label="Akademie">
          <CapIcon />
        </TaskItem>
        <TaskItem label="Verwaltung" dot={idle}>
          <svg viewBox="0 0 16 16" className="w-[15px]" aria-hidden="true">
            <circle cx="8" cy="8" r="6.800" fill="#fbeef0" stroke="#c94258" strokeWidth="1.400" />
            <path d="M5 4.500 8 11.500l3-7" fill="none" stroke="#c1223c" strokeWidth="2" />
          </svg>
        </TaskItem>
        <TaskItem label="Einstellungen" dot={idle}>
          <svg viewBox="0 0 16 16" className="w-[16px]" aria-hidden="true">
            <circle cx="8" cy="8" r="6.400" fill="none" stroke="#5f6e7c" strokeWidth="2.600" strokeDasharray="3.350 1.680" />
            <circle cx="8" cy="8" r="5.400" fill="#66788a" />
            <circle cx="8" cy="8" r="3.600" fill="#d5e2ef" />
            <circle cx="8" cy="8" r="2.500" fill="#1c5fae" />
          </svg>
        </TaskItem>
        <TaskItem label="Lernportal" dot={idle}>
          <CapIcon />
        </TaskItem>
        <span className="rounded-[3px] bg-[#eceff3]">
          <TaskItem label="Posteingang" dot="w-[10px] bg-[#1573c4]">
            <RobotBadge className="w-[17px]" />
          </TaskItem>
        </span>
      </div>
      <div className="pr-[12px] text-right font-['Lato','Noto_Sans',sans-serif] text-[8px] leading-[10px] text-[#55606c]">
        12:11:30
        <br />
        28.07.2025
      </div>
    </footer>
  );
}

export default function App() {
  return (
    <div className="flex h-screen flex-col bg-black px-[6px] pb-[6px] pt-[5px] font-['Noto_Sans',sans-serif]">
      <div className="flex min-h-0 flex-1 flex-col rounded-t-[4px] bg-[#222] px-[4px]">
        <TitleBar />
        <div className="flex min-h-0 flex-1 flex-col bg-white">
          <Toolbar />
          <main className="flex min-h-0 flex-1">
            <Sidebar />
            <div className="mr-[3px] flex min-w-0 flex-1 flex-col border-r border-[#c4c4c4] pb-[3px]">
              <div className="h-[296px] shrink-0">
                <MailTable />
              </div>
              <div className="flex h-[11px] shrink-0 items-center bg-[#f0f0ee]">
                <span className="w-[11px] text-center text-[9px] leading-[10px] text-[#999]">‹</span>
                <div className="h-full w-[44%] bg-[#cccccb]" />
                <div className="flex-1" />
                <span className="w-[11px] text-center text-[9px] leading-[10px] text-[#888]">›</span>
              </div>
              <div className="h-[4px] shrink-0 border-b border-t border-b-[#a8a8a8] border-t-[#555]" />
              <Attachments />
              <Preview />
            </div>
          </main>
          <FooterBar />
        </div>
        <Taskbar />
      </div>
    </div>
  );
}
